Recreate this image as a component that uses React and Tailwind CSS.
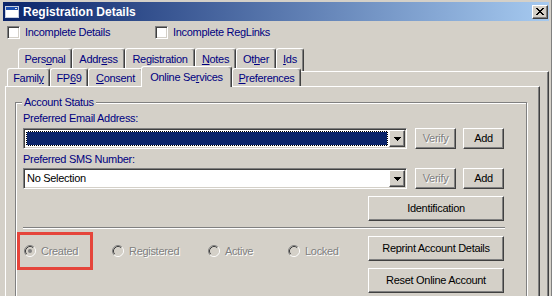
import React from 'react';

const ff = "font-['Liberation_Sans',Arial,sans-serif]";
const raised = 'border border-t-white border-l-white border-r-[#404040] border-b-[#404040] shadow-[inset_-1px_-1px_0_#808080]';
const sunken = 'border border-t-[#808080] border-l-[#808080] border-r-white border-b-white shadow-[inset_1px_1px_0_#404040,inset_-1px_-1px_0_#d4d0c8]';
const dis = 'text-[#808080] [text-shadow:1px_1px_0_#ffffff]';
const tabBase = 'box-border bg-[#d4d0c8] border-l border-t border-r border-l-white border-t-white border-r-[#404040] shadow-[inset_-1px_0_0_#808080] rounded-tl-[3px] rounded-tr-[3px] text-[#000080] text-center whitespace-nowrap';

const AppIcon = () => (
  <svg width="14" height="12" viewBox="0 0 14 12" shapeRendering="crispEdges">
    <rect x="0" y="0" width="14" height="12" fill="#c8d0e0" />
    <rect x="1" y="1" width="12" height="10" fill="#ffffff" />
    <rect x="1" y="1" width="12" height="3" fill="#1c4fb0" />
    <rect x="10" y="2" width="2" height="1" fill="#e8e8e8" />
  </svg>
);

const CheckBox = () => (
  <div className={`w-[13px] h-[13px] bg-white ${sunken}`} />
);

const DropBtn = () => (
  <div className={`w-[16px] h-[17px] bg-[#d4d0c8] flex items-center justify-center ${raised}`}>
    <svg width="7" height="4" viewBox="0 0 7 4" shapeRendering="crispEdges">
      <path d="M0 0h7v1H0z M1 1h5v1H1z M2 2h3v1H2z M3 3h1v1H3z" fill="#000" />
    </svg>
  </div>
);

const Combo = ({ selected, text }) => (
  <div className={`w-[384px] h-[21px] bg-white p-px flex ${sunken}`}>
    <div className="flex-1 p-px">
      {selected ? (
        <div className="h-full bg-black">
          <div className="h-full border border-dotted border-white bg-[#0a246a] bg-clip-padding" />
        </div>
      ) : (
        <div className="pl-[1px] leading-[15px] text-black">{text}</div>
      )}
    </div>
    <DropBtn />
  </div>
);

const Btn = ({ className = '', disabled, children }) => (
  <div className={`flex items-center justify-center bg-[#d4d0c8] ${raised} ${className}`}>
    <span className={disabled ? dis : 'text-black'}>{children}</span>
  </div>
);

const Radio = ({ checked, label, className = '' }) => (
  <div className={`flex items-center h-[12px] ${className}`}>
    <svg width="12" height="12" viewBox="0 0 12 12" className="shrink-0">
      <circle cx="6" cy="6" r="4.5" fill="#d4d0c8" />
      <path d="M2.11 9.89 A5.5 5.5 0 0 1 9.89 2.11" fill="none" stroke="#808080" strokeWidth="1" />
      <path d="M9.89 2.11 A5.5 5.5 0 0 1 2.11 9.89" fill="none" stroke="#ffffff" strokeWidth="1" />
      <path d="M2.82 9.18 A4.5 4.5 0 0 1 9.18 2.82" fill="none" stroke="#404040" strokeWidth="1" />
      <path d="M9.18 2.82 A4.5 4.5 0 0 1 2.82 9.18" fill="none" stroke="#d4d0c8" strokeWidth="1" />
      {checked && <circle cx="6" cy="6" r="2" fill="#808080" />}
    </svg>
    <span className={`ml-[5px] ${dis}`}>{label}</span>
  </div>
);

export default function App() {
  return (
    <div className={`w-[552px] h-[296px] overflow-hidden bg-[#d4d0c8] pl-[3px] pr-[2px] pt-[2px] border-r border-r-[#808080] text-[11px] leading-[13px] tracking-[-0.3px] ${ff}`}>
      {/* Title bar */}
      <div className="h-[19px] flex items-center bg-[linear-gradient(to_right,#0a246a,#a6caf0)] pl-[2px] pr-[1px]">
        <AppIcon />
        <span className="ml-[4px] text-white font-bold text-[12px] leading-[14px] tracking-normal">Registration Details</span>
        <div className={`ml-auto w-[16px] h-[14px] bg-[#d4d0c8] flex items-center justify-center ${raised}`}>
          <svg width="8" height="7" viewBox="0 0 8 7" shapeRendering="crispEdges">
            <path d="M0 0h2v1H0z M6 0h2v1H6z M1 1h2v1H1z M5 1h2v1H5z M2 2h4v1H2z M3 3h2v1H3z M2 4h4v1H2z M1 5h2v1H1z M5 5h2v1H5z M0 6h2v1H0z M6 6h2v1H6z" fill="#000" />
          </svg>
        </div>
      </div>

      {/* Flags */}
      <div className="mt-[5px] flex h-[13px] pl-[4px]">
        <div className="flex items-center w-[148px]">
          <CheckBox />
          <span className="ml-[5px] text-[#000080]">Incomplete Details</span>
        </div>
        <div className="flex items-center">
          <CheckBox />
          <span className="ml-[5px] text-[#000080]">Incomplete RegLinks</span>
        </div>
      </div>

      {/* Back tab row */}
      <div className="mt-[9px] flex h-[23px] pl-[15px]">
        <div className={`${tabBase} w-[54px] h-[23px] pt-[4px]`}>Pers<u>o</u>nal</div>
        <div className={`${tabBase} w-[53px] h-[23px] pt-[4px]`}>Addr<u>e</u>ss</div>
        <div className={`${tabBase} w-[70px] h-[23px] pt-[4px]`}>Registration</div>
        <div className={`${tabBase} w-[41px] h-[23px] pt-[4px]`}><u>N</u>otes</div>
        <div className={`${tabBase} w-[40px] h-[23px] pt-[4px]`}>Ot<u>h</u>er</div>
        <div className={`${tabBase} w-[28px] h-[23px] pt-[4px]`}><u>I</u>ds</div>
      </div>

      <div className="flex">
        <div className="w-[535px] ml-[2px] -mt-[3px] flex flex-col">
          {/* Front tab row */}
          <div className="flex h-[18px] pl-[2px]">
            <div className={`${tabBase} w-[43px] h-[18px] pt-[3px]`}>Famil<u>y</u></div>
            <div className={`${tabBase} w-[38px] h-[18px] pt-[3px]`}>FP<u>6</u>9</div>
            <div className={`${tabBase} w-[55px] h-[18px] pt-[3px]`}><u>C</u>onsent</div>
            <div className={`${tabBase} relative z-10 -ml-[2px] -mt-[2px] w-[91px] h-[21px] pt-[4px]`}>Online Se<u>r</u>vices</div>
            <div className={`${tabBase} w-[69px] h-[18px] pt-[3px]`}><u>P</u>references</div>
            <div className="flex-1 mt-[3px] border-t border-t-white" />
          </div>

          {/* Tab page */}
          <div className="h-[230px] border-t border-l border-r border-t-white border-l-white border-r-[#404040] shadow-[inset_-1px_0_0_#808080]">
            <div className="relative ml-[9px] mt-[15px] w-[512px] h-[210px] border border-[#808080] shadow-[inset_1px_1px_0_#ffffff,1px_1px_0_#ffffff] pl-[7px]">
              <span className="absolute -top-[7px] left-[6px] px-[2px] bg-[#d4d0c8] text-[#000080]">Account Status</span>

              <div className="pt-[9px] text-[#000080]">Preferred Email Address:</div>
              <div className="mt-[3px] flex">
                <Combo selected />
                <Btn className="ml-[8px] w-[41px] h-[21px]" disabled>Verify</Btn>
                <Btn className="ml-[7px] w-[41px] h-[21px]">Add</Btn>
              </div>

              <div className="mt-[4px] text-[#000080]">Preferred SMS Number:</div>
              <div className="mt-[2px] flex">
                <Combo text="No Selection" />
                <Btn className="ml-[8px] w-[41px] h-[21px]" disabled>Verify</Btn>
                <Btn className="ml-[7px] w-[41px] h-[21px]">Add</Btn>
              </div>

              <Btn className="mt-[7px] ml-[345px] w-[136px] h-[25px]">Identification</Btn>

              <div className="mt-[6px] w-[482px] h-[2px] border-t border-b border-t-[#808080] border-b-white" />

              <div className="mt-[7px] flex">
                <div className="w-[345px] mt-[9px] flex items-start">
                  <Radio checked label="Created" className="ml-[1px] w-[88px]" />
                  <Radio label="Registered" className="w-[96px]" />
                  <Radio label="Active" className="w-[80px]" />
                  <Radio label="Locked" />
                </div>
                <div className="w-[136px] flex flex-col">
                  <Btn className="w-[136px] h-[25px]">Reprint Account Details</Btn>
                  <Btn className="mt-[7px] w-[136px] h-[25px]">Reset Online Account</Btn>
                </div>
              </div>

              {/* highlight annotation */}
              <div className="absolute left-[1px] top-[129px] w-[76px] h-[38px] border-[3px] border-[#e5453b]" />
            </div>
          </div>
        </div>
        <div className="flex-1 border-t border-r border-t-white border-r-[#404040] shadow-[inset_-1px_0_0_#808080]" />
      </div>
    </div>
  );
}
